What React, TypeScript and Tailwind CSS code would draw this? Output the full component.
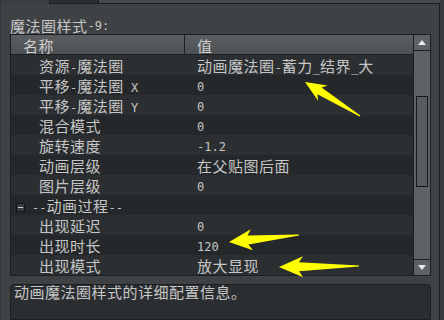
import React from 'react';

// Rows of the property grid
type Row = { k?: string; v?: string; cat?: string };

const rows: Row[] = [
  { k: '资源-魔法圈', v: '动画魔法圈-蓄力_结界_大' },
  { k: '平移-魔法圈 X', v: '0' },
  { k: '平移-魔法圈 Y', v: '0' },
  { k: '混合模式', v: '0' },
  { k: '旋转速度', v: '-1.2' },
  { k: '动画层级', v: '在父贴图后面' },
  { k: '图片层级', v: '0' },
  { cat: '--动画过程--' },
  { k: '出现延迟', v: '0' },
  { k: '出现时长', v: '120' },
  { k: '出现模式', v: '放大显现' },
];

const CJK = /([\u3000-\u9fff\uff00-\uffef]+)/;

// Latin text in a mono font, Chinese runs a little bigger
const Txt: React.FC<{ s: string }> = ({ s }) => (
  <>
    {s.split(CJK).map((p, i) =>
      CJK.test(p) ? (
        <span key={i} className="font-['Noto_Sans_CJK_SC',sans-serif] text-[15px] tracking-[0.5px]">
          {p}
        </span>
      ) : (
        <span key={i} className="whitespace-pre">{p}</span>
      )
    )}
  </>
);

// Yellow annotation arrow, tail -> tip
const arrowPoints = (tx: number, ty: number, hx: number, hy: number, headLen: number, headHalf: number, shaftHalf: number) => {
  const dx = hx - tx;
  const dy = hy - ty;
  const len = Math.hypot(dx, dy);
  const ux = dx / len;
  const uy = dy / len;
  const nx = -uy;
  const ny = ux;
  const bx = hx - ux * headLen;
  const by = hy - uy * headLen;
  const pts = [
    [tx + nx * 0.6, ty + ny * 0.6],
    [bx + nx * shaftHalf + ux * 2, by + ny * shaftHalf + uy * 2],
    [bx + nx * headHalf - ux * 2, by + ny * headHalf - uy * 2],
    [hx, hy],
    [bx - nx * headHalf - ux * 2, by - ny * headHalf - uy * 2],
    [bx - nx * shaftHalf + ux * 2, by - ny * shaftHalf + uy * 2],
    [tx - nx * 0.6, ty - ny * 0.6],
  ];
  return pts.map((p) => p.map((n) => n.toFixed(1)).join(',')).join(' ');
};

const Arrows = () => (
  <svg className="absolute inset-0 pointer-events-none" width={444} height={320}>
    <polygon points={arrowPoints(360, 116, 305, 82, 19, 9, 4)} fill="#ffff00" />
    <polygon points={arrowPoints(299, 235, 229, 242, 21, 10.5, 4.5)} fill="#ffff00" />
    <polygon points={arrowPoints(359, 266, 279, 267, 22, 10.5, 4.5)} fill="#ffff00" />
  </svg>
);

const Tri: React.FC<{ down?: boolean }> = ({ down }) => (
  <svg width={8} height={5} viewBox="0 0 8 5">
    <polygon points={down ? '0,0 8,0 4,5' : '4,0 8,5 0,5'} fill="#e8e8e8" />
  </svg>
);

export default function App() {
  return (
    <div className="relative w-[444px] h-[320px] overflow-hidden bg-[#3b3e41] flex font-['DejaVu_Sans_Mono','Noto_Sans_CJK_SC',monospace] text-[12px] text-[#c6c6c6]">
      <div className="w-[440px] flex flex-col">
        {/* top strip under the tabs */}
        <div className="h-[4px] flex">
          <div className="w-[49px] border-l border-[#303335]" />
          <div className="w-[50px] bg-[#2b2d30] border-x border-b border-[#1c1e20]" />
          <div className="flex-1 bg-[#474a4d] border-b border-[#1c1e20]" />
        </div>

        <div className="flex-1 flex flex-col border-r border-l border-[#1c1e20] border-l-[#34373a] bg-[#3f4245] pl-[9px] pr-[8px]">
          <div className="h-[30px] flex items-end leading-[14px] pb-[1px]">
            <Txt s="魔法圈样式-9:" />
          </div>

          {/* property grid */}
          <div className="h-[242px] flex border border-[#1c1e20]">
            <div className="flex-1 flex flex-col">
              <div className="h-[20px] flex border-b border-[#1c1e20] bg-gradient-to-b from-[#5b5e61] to-[#4e5154] pt-[3px] leading-[16px] text-[#cfcfcf]">
                <div className="w-[173px] pl-[12px]">
                  <Txt s="名称" />
                </div>
                <div className="flex-1 border-l border-[#1c1e20] -mt-[3px] pt-[3px] pl-[12px]">
                  <Txt s="值" />
                </div>
              </div>
              {rows.map((r, i) => (
                <div
                  key={i}
                  className={`h-[20px] flex items-center pt-[4px] leading-[16px] ${i % 2 === 0 ? 'bg-[#2c2f32]' : 'bg-[#25282a]'}`}
                >
                  {r.cat ? (
                    <div className="flex items-center pl-[5px]">
                      <div className="w-[9px] h-[9px] border border-[#141618] bg-[#3a3d40] flex items-center justify-center">
                        <div className="w-[5px] h-[1px] bg-[#d0d0d0]" />
                      </div>
                      <div className="pl-[7px]">
                        <Txt s={r.cat} />
                      </div>
                    </div>
                  ) : (
                    <>
                      <div className="w-[174px] pl-[28px]">
                        <Txt s={r.k!} />
                      </div>
                      <div className="flex-1 pl-[12px]">
                        <Txt s={r.v!} />
                      </div>
                    </>
                  )}
                </div>
              ))}
            </div>

            {/* scrollbar */}
            <div className="w-[17px] flex flex-col border-l border-[#1c1e20] bg-[#5e6265]">
              <div className="h-[16px] flex items-center justify-center border-b border-[#1c1e20]">
                <Tri />
              </div>
              <div className="flex-1 px-[2px] pt-[45px]">
                <div className="h-[91px] border border-[#15171a] bg-[#585c5f]" />
              </div>
              <div className="h-[16px] flex items-center justify-center border-t border-[#1c1e20]">
                <Tri down />
              </div>
            </div>
          </div>

          {/* description */}
          <div className="mt-[8px] flex-1 rounded-t-[4px] border border-[#1c1e20] bg-[#2b2e31] px-[3px] leading-[14px]">
            <Txt s="动画魔法圈样式的详细配置信息。" />
          </div>
        </div>
      </div>
      <div className="flex-1 bg-[#3a3d40]" />
      <Arrows />
    </div>
  );
}
